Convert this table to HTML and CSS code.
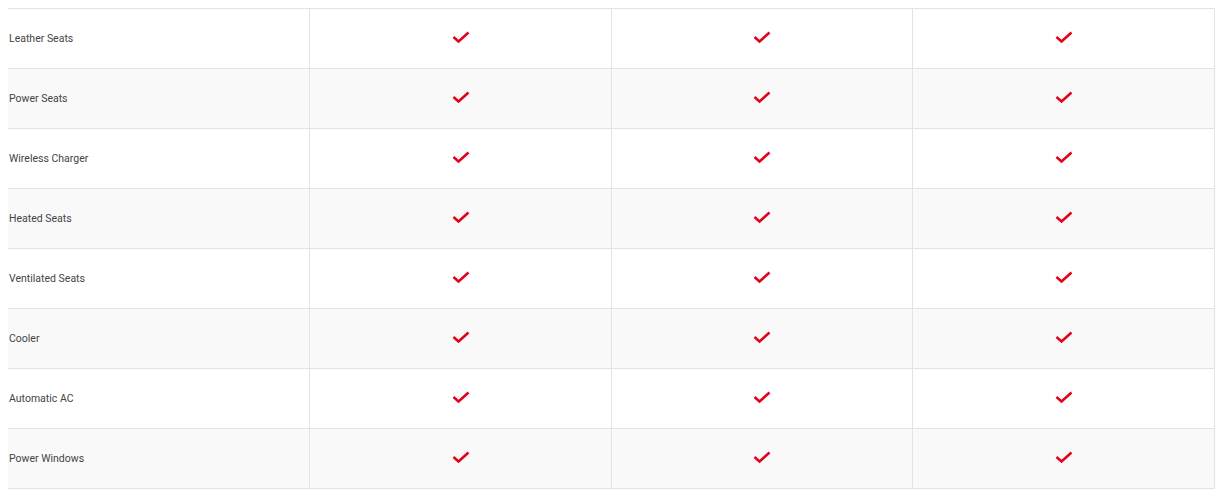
FILE: index.html
```html
<!DOCTYPE html>
<html>
<head>
<meta charset="utf-8">
<link rel="stylesheet" href="styles.css">
</head>
<body>
<div class="spec">
<div class="row"><div class="name">Leather Seats</div><div class="c"><svg class="chk" viewBox="0 0 18 14"><path d="M1.5 6 L6.5 10.5 L16.5 1.5"/></svg></div><div class="c"><svg class="chk" viewBox="0 0 18 14"><path d="M1.5 6 L6.5 10.5 L16.5 1.5"/></svg></div><div class="c"><svg class="chk" viewBox="0 0 18 14"><path d="M1.5 6 L6.5 10.5 L16.5 1.5"/></svg></div></div>
<div class="row"><div class="name">Power Seats</div><div class="c"><svg class="chk" viewBox="0 0 18 14"><path d="M1.5 6 L6.5 10.5 L16.5 1.5"/></svg></div><div class="c"><svg class="chk" viewBox="0 0 18 14"><path d="M1.5 6 L6.5 10.5 L16.5 1.5"/></svg></div><div class="c"><svg class="chk" viewBox="0 0 18 14"><path d="M1.5 6 L6.5 10.5 L16.5 1.5"/></svg></div></div>
<div class="row"><div class="name">Wireless Charger</div><div class="c"><svg class="chk" viewBox="0 0 18 14"><path d="M1.5 6 L6.5 10.5 L16.5 1.5"/></svg></div><div class="c"><svg class="chk" viewBox="0 0 18 14"><path d="M1.5 6 L6.5 10.5 L16.5 1.5"/></svg></div><div class="c"><svg class="chk" viewBox="0 0 18 14"><path d="M1.5 6 L6.5 10.5 L16.5 1.5"/></svg></div></div>
<div class="row"><div class="name">Heated Seats</div><div class="c"><svg class="chk" viewBox="0 0 18 14"><path d="M1.5 6 L6.5 10.5 L16.5 1.5"/></svg></div><div class="c"><svg class="chk" viewBox="0 0 18 14"><path d="M1.5 6 L6.5 10.5 L16.5 1.5"/></svg></div><div class="c"><svg class="chk" viewBox="0 0 18 14"><path d="M1.5 6 L6.5 10.5 L16.5 1.5"/></svg></div></div>
<div class="row"><div class="name">Ventilated Seats</div><div class="c"><svg class="chk" viewBox="0 0 18 14"><path d="M1.5 6 L6.5 10.5 L16.5 1.5"/></svg></div><div class="c"><svg class="chk" viewBox="0 0 18 14"><path d="M1.5 6 L6.5 10.5 L16.5 1.5"/></svg></div><div class="c"><svg class="chk" viewBox="0 0 18 14"><path d="M1.5 6 L6.5 10.5 L16.5 1.5"/></svg></div></div>
<div class="row"><div class="name">Cooler</div><div class="c"><svg class="chk" viewBox="0 0 18 14"><path d="M1.5 6 L6.5 10.5 L16.5 1.5"/></svg></div><div class="c"><svg class="chk" viewBox="0 0 18 14"><path d="M1.5 6 L6.5 10.5 L16.5 1.5"/></svg></div><div class="c"><svg class="chk" viewBox="0 0 18 14"><path d="M1.5 6 L6.5 10.5 L16.5 1.5"/></svg></div></div>
<div class="row"><div class="name">Automatic AC</div><div class="c"><svg class="chk" viewBox="0 0 18 14"><path d="M1.5 6 L6.5 10.5 L16.5 1.5"/></svg></div><div class="c"><svg class="chk" viewBox="0 0 18 14"><path d="M1.5 6 L6.5 10.5 L16.5 1.5"/></svg></div><div class="c"><svg class="chk" viewBox="0 0 18 14"><path d="M1.5 6 L6.5 10.5 L16.5 1.5"/></svg></div></div>
<div class="row"><div class="name">Power Windows</div><div class="c"><svg class="chk" viewBox="0 0 18 14"><path d="M1.5 6 L6.5 10.5 L16.5 1.5"/></svg></div><div class="c"><svg class="chk" viewBox="0 0 18 14"><path d="M1.5 6 L6.5 10.5 L16.5 1.5"/></svg></div><div class="c"><svg class="chk" viewBox="0 0 18 14"><path d="M1.5 6 L6.5 10.5 L16.5 1.5"/></svg></div></div>
</div>
</body>
</html>
```

FILE: styles.css
```css
html {
  background: #fff;
}
body {
  margin: 8px 0 0 8px;
  font-family: Roboto, "Liberation Sans", sans-serif;
}
.spec {
  width: 1207px;
  border-top: 1px solid #e3e3e3;
}
.row {
  display: grid;
  grid-template-columns: 302px 302px 301px 302px;
  height: 60px;
  box-sizing: border-box;
  border-bottom: 1px solid #e3e3e3;
}
.row:nth-child(even) {
  background: #f9f9f9;
}
.row > div {
  box-sizing: border-box;
  border-right: 1px solid #e3e3e3;
  display: flex;
  align-items: center;
}
.name {
  font-size: 10.5px;
  color: #444;
  padding-left: 1px;
}
.c {
  justify-content: center;
}
.chk {
  display: block;
  width: 18px;
  height: 14px;
  position: relative;
  top: -1px;
}
.chk path {
  fill: none;
  stroke: #e4001b;
  stroke-width: 2.5;
}
```
